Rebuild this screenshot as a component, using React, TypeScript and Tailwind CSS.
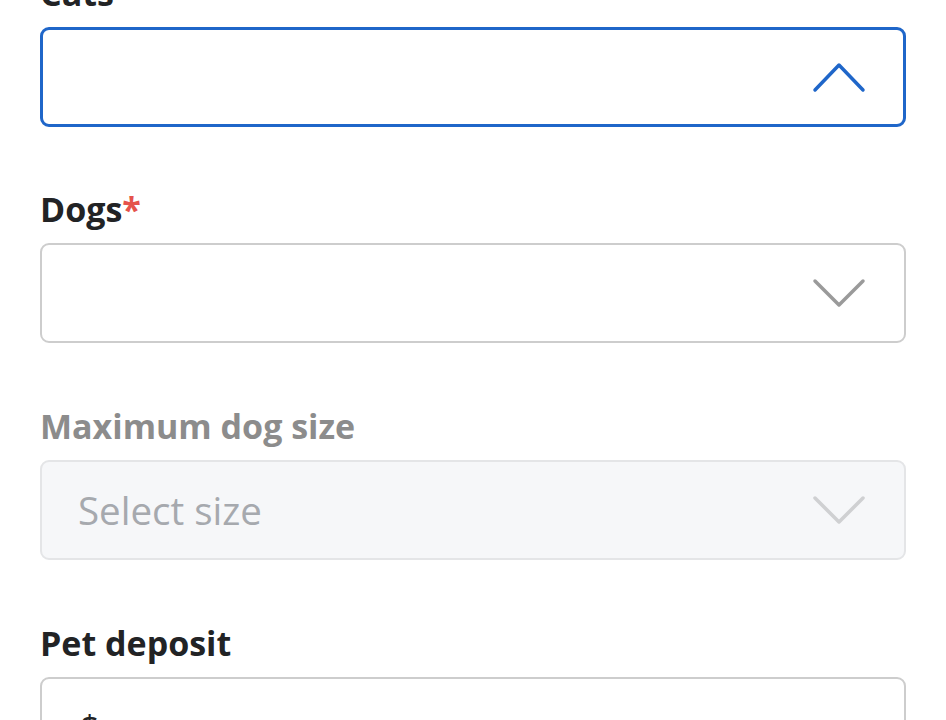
import React from "react";

const font = { fontFamily: '"Open Sans", "Noto Sans", Arial, sans-serif' };

function Chevron({ up, color }: { up?: boolean; color: string }) {
  return (
    <svg width="54" height="32" viewBox="0 0 54 32" fill="none" className="shrink-0">
      <polyline
        points={up ? "3,29 27,4 51,29" : "3,4 27,28 51,4"}
        stroke={color}
        strokeWidth="3.5"
        strokeLinecap="round"
        strokeLinejoin="round"
      />
    </svg>
  );
}

function Label({ text, required, disabled }: { text: string; required?: boolean; disabled?: boolean }) {
  return (
    <div
      className={`text-[34px] font-bold leading-[44px] ${disabled ? "text-[#8c8c8c]" : "text-[#222325]"}`}
    >
      {text}
      {required && <span className="text-[#e5534b]">*</span>}
    </div>
  );
}

export default function App() {
  return (
    <div className="h-[720px] bg-white overflow-hidden" style={font}>
      <div className="px-[40px] -mt-[29px] flex flex-col">
        {/* Cats (open) */}
        <Label text="Cats" required />
        <div className="mt-[12px] h-[100px] rounded-[9px] border-[3px] border-[#1f66c9] bg-white flex items-center justify-end pr-[37px]">
          <Chevron up color="#1f66c9" />
        </div>

        {/* Dogs */}
        <div className="mt-[60px]">
          <Label text="Dogs" required />
        </div>
        <div className="mt-[12px] h-[100px] rounded-[9px] border-2 border-[#cdcdcd] bg-white flex items-center justify-end pr-[38px]">
          <Chevron color="#9a9a9a" />
        </div>

        {/* Maximum dog size (disabled) */}
        <div className="mt-[61px]">
          <Label text="Maximum dog size" disabled />
        </div>
        <div className="mt-[12px] h-[100px] rounded-[9px] border-2 border-[#e4e5e7] bg-[#f6f7f9] flex items-center justify-between pl-[36px] pr-[38px]">
          <span className="text-[38.5px] text-[#a6a9ae] leading-none">Select size</span>
          <Chevron color="#cfd0d2" />
        </div>

        {/* Pet deposit */}
        <div className="mt-[61px]">
          <Label text="Pet deposit" />
        </div>
        <div className="mt-[12px] h-[100px] rounded-[9px] border-2 border-[#cdcdcd] bg-white flex items-center pl-[38px]">
          <span className="text-[34px] text-[#222325] leading-none">$</span>
        </div>
      </div>
    </div>
  );
}
